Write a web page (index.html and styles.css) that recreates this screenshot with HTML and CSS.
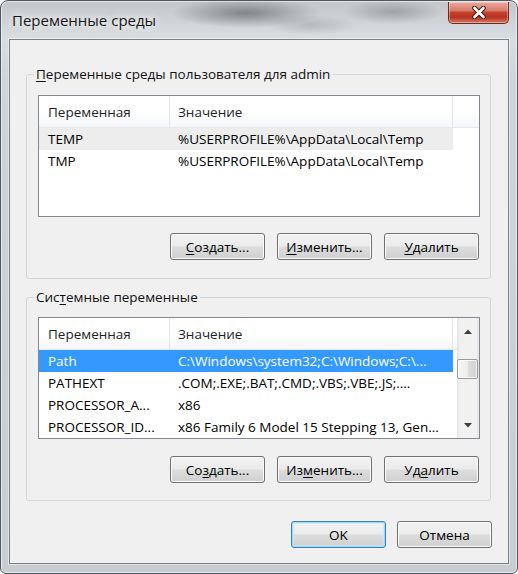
FILE: index.html
```html
<!DOCTYPE html>
<html lang="ru">
<head>
<meta charset="utf-8">
<title>Переменные среды</title>
<link rel="stylesheet" href="styles.css">
</head>
<body>
<div class="window">
  <div class="titlebar">
    <span class="title">Переменные среды</span>
    <div class="close">
      <svg width="16" height="13" viewBox="0 0 16 13">
        <path d="M3.5 2 L12.5 11 M12.5 2 L3.5 11" stroke="#4a1810" stroke-width="4.6" stroke-linecap="round" fill="none"/>
        <path d="M3.5 2 L12.5 11 M12.5 2 L3.5 11" stroke="#ffffff" stroke-width="2.6" stroke-linecap="round" fill="none"/>
      </svg>
    </div>
  </div>
  <div class="client">
    <fieldset class="group group-user">
      <legend><u>П</u>еременные среды пользователя для admin</legend>
      <div class="list">
        <div class="list-main">
          <div class="row header"><div class="c1">Переменная</div><div class="c2">Значение</div><div class="fill"></div></div>
          <div class="row item inactive-sel"><div class="c1">TEMP</div><div class="c2">%USERPROFILE%\AppData\Local\Temp</div></div>
          <div class="row item"><div class="c1">TMP</div><div class="c2">%USERPROFILE%\AppData\Local\Temp</div></div>
        </div>
      </div>
      <div class="buttons">
        <button class="btn"><u>С</u>оздать...</button>
        <button class="btn"><u>И</u>зменить...</button>
        <button class="btn"><u>У</u>далить</button>
      </div>
    </fieldset>
    <fieldset class="group group-sys">
      <legend>Сис<u>т</u>емные переменные</legend>
      <div class="list">
        <div class="list-main">
          <div class="row header"><div class="c1">Переменная</div><div class="c2">Значение</div><div class="fill"></div></div>
          <div class="row item selected"><div class="c1">Path</div><div class="c2">C:\Windows\system32;C:\Windows;C:\...</div></div>
          <div class="row item"><div class="c1">PATHEXT</div><div class="c2">.COM;.EXE;.BAT;.CMD;.VBS;.VBE;.JS;....</div></div>
          <div class="row item"><div class="c1">PROCESSOR_A...</div><div class="c2">x86</div></div>
          <div class="row item"><div class="c1">PROCESSOR_ID...</div><div class="c2">x86 Family 6 Model 15 Stepping 13, Gen...</div></div>
        </div>
        <div class="scrollbar">
          <div class="sb-btn">
            <svg width="8" height="5" viewBox="0 0 8 5"><polygon points="0,5 4,0.5 8,5" fill="#3f3f3f"/></svg>
          </div>
          <div class="sb-track"><div class="thumb"></div></div>
          <div class="sb-btn">
            <svg width="8" height="5" viewBox="0 0 8 5"><polygon points="0,0 8,0 4,4.5" fill="#3f3f3f"/></svg>
          </div>
        </div>
      </div>
      <div class="buttons">
        <button class="btn">Со<u>з</u>дать...</button>
        <button class="btn">Из<u>м</u>енить...</button>
        <button class="btn">Уд<u>а</u>лить</button>
      </div>
    </fieldset>
    <div class="dialog-buttons">
      <button class="btn default">OK</button>
      <button class="btn">Отмена</button>
    </div>
  </div>
</div>
</body>
</html>
```
FILE: styles.css
```css
* { box-sizing: border-box; }
html, body { margin: 0; padding: 0; background: #ffffff; }
body {
  width: 518px;
  height: 574px;
  overflow: hidden;
  font-family: "Open Sans", "Noto Sans", sans-serif;
  font-size: 13.5px;
  color: #111111;
}
u { text-decoration-thickness: 1px; text-underline-offset: 2px; }

.window {
  width: 518px;
  height: 574px;
  border: 1px solid #50565d;
  border-radius: 8px 8px 6px 6px;
  padding: 0 8px 9px 8px;
  display: flex;
  flex-direction: column;
  box-shadow: inset 0 0 0 1px rgba(255,255,255,0.55);
  background:
    radial-gradient(ellipse 75px 15px at 245px 12px, rgba(70,72,76,0.55), rgba(70,72,76,0)),
    radial-gradient(ellipse 50px 12px at 392px 11px, rgba(80,82,86,0.35), rgba(80,82,86,0)),
    radial-gradient(ellipse 45px 10px at 310px 24px, rgba(100,102,106,0.25), rgba(100,102,106,0)),
    linear-gradient(to bottom, #c2c6cb 0px, #ced1d5 18px, #dadde0 38px, #d0d3d7 80px, #c9cdd1 100%);
}

.titlebar {
  height: 38px;
  display: flex;
  align-items: center;
  justify-content: space-between;
}
.title {
  padding-left: 3px;
  font-size: 15px;
  color: #161616;
  text-shadow: 0 0 6px #ffffff, 0 0 12px rgba(255,255,255,0.9);
}
.close {
  align-self: flex-start;
  margin-top: 1px;
  width: 61px;
  height: 22px;
  display: flex;
  align-items: center;
  justify-content: center;
  border: 1px solid #6b2a22;
  border-top: none;
  border-radius: 0 0 5px 5px;
  background: linear-gradient(to bottom, #e9aa9e 0%, #d97c6c 40%, #c4402f 50%, #b8311f 72%, #d47a62 100%);
  box-shadow: inset 0 0 0 1px rgba(255,255,255,0.35);
}

.client {
  flex: 1;
  background: #f0f0f0;
  border: 1px solid #7a8087;
  box-shadow: 0 0 0 1px rgba(255,255,255,0.45);
  display: flex;
  flex-direction: column;
}

.group {
  margin: 24px 17px 0 16px;
  padding: 11px 10px 18px 11px;
  border: 1px solid #d0d9df;
  border-radius: 3px;
  min-width: 0;
}
.group-sys {
  margin-top: 8px;
  padding-top: 10px;
  padding-bottom: 17px;
}
legend {
  padding: 0 2px;
  margin-left: -4px;
  line-height: 20px;
  color: #111111;
}

.list {
  height: 122px;
  border: 1px solid #828790;
  background: #ffffff;
  display: flex;
}
.list-main {
  flex: 1;
  min-width: 0;
  overflow: hidden;
}
.row {
  display: flex;
  height: 22px;
  align-items: center;
  white-space: nowrap;
  color: #000;
}
.row.item { width: 414px; }
.c1 { width: 131px; flex: none; padding-left: 9px; overflow: hidden; }
.c2 { width: 283px; flex: none; padding-left: 8px; overflow: hidden; }
.header {
  height: 32px;
  align-items: stretch;
  background: linear-gradient(to bottom, #ffffff 0%, #ffffff 50%, #f5f6f8 100%);
  border-bottom: 1px solid #e5e7ea;
  color: #1e1e1e;
}
.header .c1, .header .c2 {
  display: flex;
  align-items: center;
  border-right: 1px solid #e2e5e9;
}
.header .fill { flex: 1; }
.inactive-sel { background: #ededed; }
.selected { background: #3399ff; color: #ffffff; }

.scrollbar {
  width: 22px;
  flex: none;
  display: flex;
  flex-direction: column;
  background: linear-gradient(to right, #e4e4e4 0%, #f1f1f1 15%, #f1f1f1 85%, #e4e4e4 100%);
}
.sb-btn {
  height: 26px;
  display: flex;
  align-items: center;
  justify-content: center;
}
.sb-track {
  flex: 1;
  padding-top: 15px;
}
.thumb {
  height: 20px;
  margin-right: 1px;
  border: 1px solid #999999;
  border-radius: 2px;
  background: linear-gradient(to right, #f7f7f7 0%, #ececec 50%, #dedede 51%, #d0d0d0 100%);
  box-shadow: inset 0 0 0 1px rgba(255,255,255,0.8);
}

.buttons {
  display: flex;
  justify-content: flex-end;
  gap: 12px;
  margin-top: 16px;
  margin-right: 1px;
}
.group-sys .buttons { margin-top: 17px; }

.btn {
  width: 95px;
  height: 27px;
  padding: 0;
  font-family: inherit;
  font-size: 13.5px;
  color: #000;
  border: 1px solid #707070;
  border-radius: 3px;
  background: linear-gradient(to bottom, #f2f2f2 0%, #ebebeb 48%, #dddddd 52%, #cfcfcf 100%);
  box-shadow: inset 0 0 0 1px #fbfbfb;
}
.btn.default {
  border-color: #3c7fb1;
  box-shadow: inset 0 0 0 1px #9fdcf6, inset 0 0 0 2px rgba(190,235,252,0.6);
}

.dialog-buttons {
  display: flex;
  justify-content: flex-end;
  gap: 11px;
  margin-top: 20px;
  padding-right: 16px;
}
```
